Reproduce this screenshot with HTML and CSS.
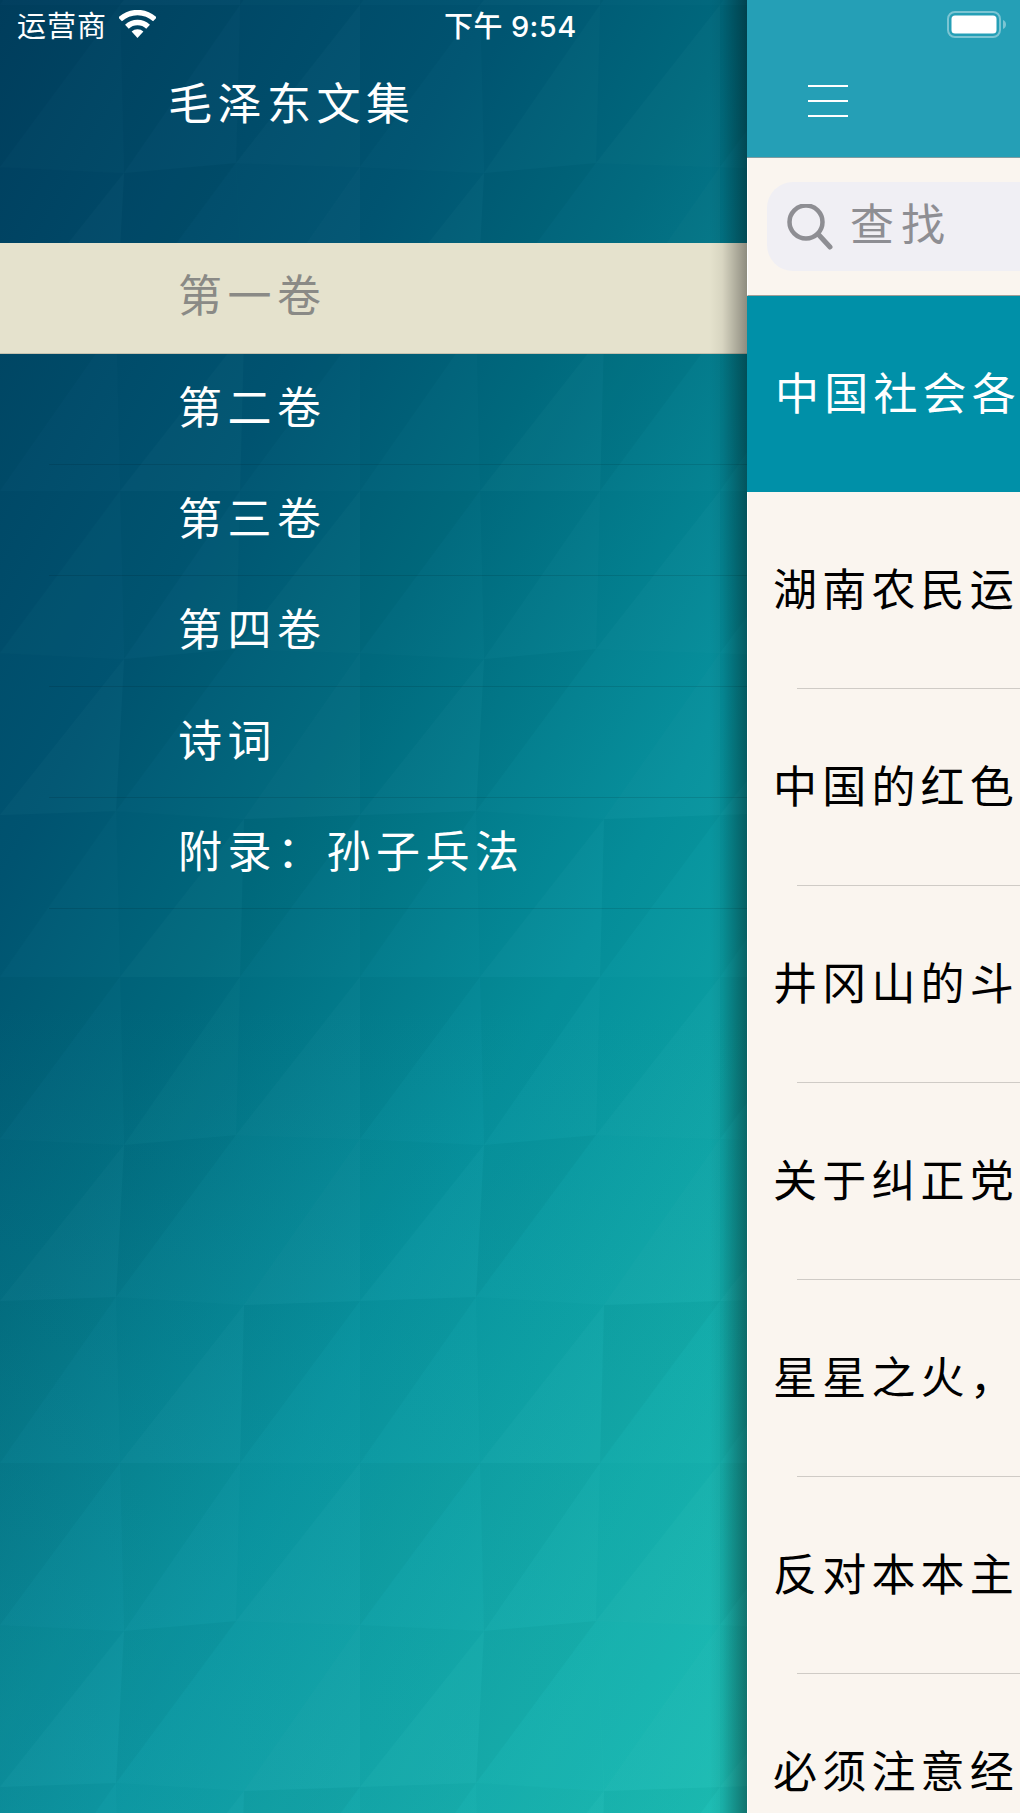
FILE: index.html
```html
<!DOCTYPE html>
<html lang="zh-CN">
<head>
    <meta charset="UTF-8">
    <meta name="viewport" content="width=device-width, initial-scale=1.0">
    <title>毛泽东文集</title>
    <link rel="stylesheet" href="styles.css">
</head>
<body>
    <div class="app">
        <!-- Side menu, sits on the low-poly picture -->
        <div class="menu">
            <svg class="menu-bg" width="747" height="1813" aria-hidden="true">
                <defs>
                    <linearGradient id="bgGrad" gradientUnits="userSpaceOnUse" x1="0" y1="0" x2="1318" y2="743">
                        <stop offset="0" stop-color="#003e5e"/>
                        <stop offset="0.286" stop-color="#005572"/>
                        <stop offset="0.43" stop-color="#006a7e"/>
                        <stop offset="0.643" stop-color="#05909c"/>
                        <stop offset="1" stop-color="#18c0b2"/>
                    </linearGradient>
                    <linearGradient id="bgLift" gradientUnits="userSpaceOnUse" x1="0" y1="1000" x2="0" y2="1813">
                        <stop offset="0" stop-color="#2ab0b8" stop-opacity="0"/>
                        <stop offset="1" stop-color="#2ab0b8" stop-opacity=".22"/>
                    </linearGradient>
                    <pattern id="bgPoly" patternUnits="userSpaceOnUse" x="0" y="5" width="360" height="486">
                        <!-- row 1 -->
                        <polygon points="0,0 120,0 0,162" fill="#000" fill-opacity=".04"/>
                        <polygon points="120,0 124,168 0,162" fill="#fff" fill-opacity=".015"/>
                        <polygon points="120,0 240,0 124,168" fill="#000" fill-opacity=".03"/>
                        <polygon points="240,0 236,158 124,168" fill="#fff" fill-opacity=".02"/>
                        <polygon points="240,0 360,0 236,158" fill="#000" fill-opacity=".015"/>
                        <polygon points="360,0 360,162 236,158" fill="#fff" fill-opacity=".03"/>
                        <!-- row 2 -->
                        <polygon points="0,162 124,168 0,324" fill="#000" fill-opacity=".02"/>
                        <polygon points="124,168 116,320 0,324" fill="#fff" fill-opacity=".03"/>
                        <polygon points="124,168 236,158 116,320" fill="#000" fill-opacity=".045"/>
                        <polygon points="236,158 244,328 116,320" fill="#fff" fill-opacity=".01"/>
                        <polygon points="236,158 360,162 244,328" fill="#fff" fill-opacity=".01"/>
                        <polygon points="360,162 360,324 244,328" fill="#fff" fill-opacity=".035"/>
                        <!-- row 3 -->
                        <polygon points="0,324 116,320 0,486" fill="#000" fill-opacity=".035"/>
                        <polygon points="116,320 120,486 0,486" fill="#fff" fill-opacity=".01"/>
                        <polygon points="116,320 244,328 120,486" fill="#000" fill-opacity=".015"/>
                        <polygon points="244,328 240,486 120,486" fill="#fff" fill-opacity=".03"/>
                        <polygon points="244,328 360,324 240,486" fill="#000" fill-opacity=".04"/>
                        <polygon points="360,324 360,486 240,486" fill="#fff" fill-opacity=".015"/>
                    </pattern>
                </defs>
                <rect width="747" height="1813" fill="url(#bgGrad)"/>
                <rect width="747" height="1813" fill="url(#bgLift)"/>
                <rect width="747" height="1813" fill="url(#bgPoly)" opacity=".55"/>
            </svg>

            <div class="status">
                <span class="carrier">运营商</span>
                <svg class="wifi" width="37" height="28" viewBox="0 0 37 28">
                    <path d="M1.1 9.4A25.5 25.5 0 0 1 35.9 9.4" fill="none" stroke="#fff" stroke-width="5.4"/>
                    <path d="M7.9 16.7A15.5 15.5 0 0 1 29.1 16.7" fill="none" stroke="#fff" stroke-width="5.4"/>
                    <path d="M18.5 28L12.6 21.6A8.5 8.5 0 0 1 24.4 21.6Z" fill="#fff"/>
                </svg>
                <span class="time">下午 9:54</span>
            </div>
            <div class="book-title">毛泽东文集</div>
            <ul class="volumes">
                <li class="volume selected">第一卷</li>
                <li class="volume">第二卷</li>
                <li class="volume">第三卷</li>
                <li class="volume">第四卷</li>
                <li class="volume">诗词</li>
                <li class="volume">附录：孙子兵法</li>
            </ul>
        </div>

        <!-- Article list, pushed aside by the menu -->
        <div class="panel">
            <div class="panel-head">
                <div class="panel-status">
                    <svg class="battery" width="60" height="27" viewBox="0 0 60 27">
                        <rect x="1" y="1" width="52" height="25" rx="7" fill="none" stroke="#fff" stroke-opacity=".4" stroke-width="2"/>
                        <rect x="4.5" y="4.5" width="45" height="18" rx="3.5" fill="#fff"/>
                        <path d="M56 9c2 .8 3 2.6 3 4.5s-1 3.700-3 4.500z" fill="#fff" fill-opacity=".4"/>
                    </svg>
                </div>
                <div class="hamburger"><i></i><i></i><i></i></div>
            </div>
            <div class="search">
                <div class="search-field">
                    <svg class="search-icon" width="46" height="46" viewBox="0 0 46 46">
                        <circle cx="19" cy="18" r="16.500" fill="none" stroke="#8e8e93" stroke-width="4.500"/>
                        <path d="M31 30L43 43" fill="none" stroke="#8e8e93" stroke-width="5" stroke-linecap="round"/>
                    </svg>
                    <span>查找</span>
                </div>
            </div>
            <ul class="articles">
                <li class="article active">中国社会各</li>
                <li class="article">湖南农民运</li>
                <li class="article">中国的红色</li>
                <li class="article">井冈山的斗</li>
                <li class="article">关于纠正党</li>
                <li class="article">星星之火，</li>
                <li class="article">反对本本主</li>
                <li class="article">必须注意经</li>
            </ul>
        </div>
    </div>
</body>
</html>
```

FILE: styles.css
```css
* {
    box-sizing: border-box;
}

body {
    margin: 0;
    font-family: "Noto Sans CJK SC", "Noto Sans", sans-serif;
    overflow: hidden;
}

ul {
    margin: 0;
    padding: 0;
    list-style: none;
}

.app {
    width: 1020px;
    height: 1813px;
    display: flex;
    overflow: hidden;
}

/* Side menu */
.menu {
    position: relative;
    flex: none;
    width: 747px;
    color: #fff;
}

.menu-bg {
    position: absolute;
    left: 0;
    top: 0;
}

/* Shadow the panel throws over the menu */
.menu::after {
    content: "";
    position: absolute;
    top: 0;
    right: 0;
    bottom: 0;
    width: 38px;
    background: linear-gradient(to right, rgba(0, 0, 0, 0), rgba(0, 0, 0, 0.06) 35%, rgba(0, 0, 0, 0.38));
}

.status {
    position: relative;
    height: 52px;
    display: flex;
    align-items: center;
    padding: 0 0 4px 17px;
}

.carrier {
    font-size: 29px;
    letter-spacing: 1px;
}

.wifi {
    margin-left: 12px;
}

.time {
    margin-left: 288px;
    font-family: Inter, "Noto Sans CJK SC", sans-serif;
    font-size: 29px;
    font-weight: 500;
    letter-spacing: 0.4px;
}

.book-title {
    position: relative;
    height: 191px;
    padding-left: 168px;
    font-size: 44px;
    line-height: 98px;
    letter-spacing: 5.5px;
}

.volumes {
    position: relative;
}

.volume {
    position: relative;
    height: 111px;
    display: flex;
    align-items: center;
    padding: 0 0 10px 178px;
    font-size: 44px;
    letter-spacing: 5.500px;
}

.volume::after {
    content: "";
    position: absolute;
    left: 49px;
    right: 0;
    bottom: 0;
    height: 1px;
    background-color: rgba(0, 0, 0, 0.1);
}

.volume.selected {
    background-color: #e5e2cd;
    color: #8a8a86;
    border-bottom: 1px solid #c4c2b0;
}

.volume.selected::after {
    display: none;
}

/* Article list */
.panel {
    position: relative;
    flex: 1;
    min-width: 0;
    background-color: #faf5ef;
    overflow: hidden;
}

.panel-head {
    height: 158px;
    background-color: #259fb6;
    border-bottom: 1px solid #7e9ca2;
}

.panel-status {
    height: 52px;
    padding: 11px 0 0 200px;
}

.battery {
    display: block;
}

.hamburger {
    display: flex;
    flex-direction: column;
    gap: 13px;
    width: 40px;
    margin: 33px 0 0 61px;
}

.hamburger i {
    display: block;
    height: 2px;
    background-color: #fff;
}

.search {
    height: 138px;
    padding: 24px 0 0 19px;
    background-color: #faf5ef;
    border-left: 1px solid #fff;
    border-bottom: 1px solid #a09d98;
}

.search-field {
    width: 300px;
    height: 89px;
    display: flex;
    align-items: center;
    gap: 17px;
    padding: 0 0 10px 20px;
    border-radius: 26px;
    background-color: #f0eff4;
    color: #8e8e93;
    font-size: 44px;
    letter-spacing: 7px;
}

.search-icon {
    flex: none;
    margin-top: 10px;
}

.article {
    position: relative;
    height: 197px;
    display: flex;
    align-items: center;
    padding: 0 0 7px 25px;
    border-left: 1px solid #fff;
    color: #000;
    font-size: 44px;
    letter-spacing: 5.200px;
    white-space: nowrap;
}

.article::after {
    content: "";
    position: absolute;
    left: 49px;
    right: 0;
    bottom: 0;
    height: 1px;
    background-color: #cfcbc6;
}

.article.active {
    height: 196px;
    border-left-color: #0090a8;
    background-color: #0090a8;
    color: #fff;
    padding-left: 27px;
}

.article.active::after {
    display: none;
}
```
